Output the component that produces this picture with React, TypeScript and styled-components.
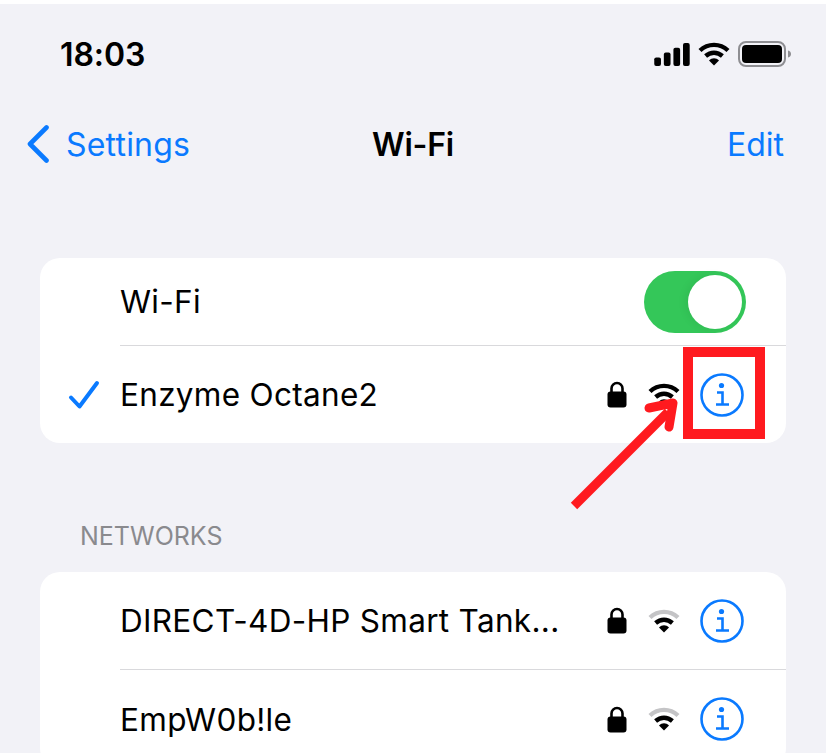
import React from "react";
import styled, { createGlobalStyle } from "styled-components";

const BLUE = "#0a7aff";

const GlobalStyle = createGlobalStyle`
  html, body {
    margin: 0;
    padding: 0;
    background: #ffffff;
    overflow: hidden;
  }
  * { box-sizing: border-box; }
`;

const Page = styled.div`
  position: relative;
  width: 826px;
  height: 749px;
  margin-top: 4px;
  background: #f2f2f7;
  overflow: hidden;
  font-family: Inter, "Liberation Sans", sans-serif;
  color: #000;
`;

const StatusBar = styled.div`
  display: flex;
  align-items: center;
  justify-content: space-between;
  height: 100px;
  padding: 0 34px 0 60px;
`;

const Time = styled.div`
  font-size: 32px;
  font-weight: 600;
  letter-spacing: -0.1px;
`;

const StatusIcons = styled.div`
  display: flex;
  align-items: center;
  gap: 8px;
`;

const NavBar = styled.div`
  display: grid;
  grid-template-columns: 1fr auto 1fr;
  align-items: center;
  height: 80px;
  padding: 0 34px;
  font-size: 32px;
`;

const BackLink = styled.div`
  display: flex;
  align-items: center;
  gap: 16px;
  margin-left: -8px;
  color: ${BLUE};
  letter-spacing: 0.2px;
`;

const NavTitle = styled.div`
  font-weight: 600;
  letter-spacing: -0.2px;
`;

const EditLink = styled.div`
  justify-self: end;
  margin-right: 8px;
  color: ${BLUE};
`;

const Card = styled.div`
  margin: 0 40px;
  background: #fff;
  border-radius: 20px;
`;

const FirstCard = styled(Card)`
  margin-top: 74px;
`;

const Row = styled.div<{ $height: number }>`
  display: flex;
  align-items: center;
  height: ${({ $height }) => $height}px;
`;

const Lead = styled.div`
  display: flex;
  align-items: center;
  justify-content: center;
  flex: none;
  width: 80px;
  padding-left: 8px;
`;

const RowBody = styled.div<{ $divider?: boolean }>`
  display: flex;
  align-items: center;
  flex: 1;
  min-width: 0;
  height: 100%;
  padding-right: 40px;
  border-bottom: ${({ $divider }) => ($divider ? "1.5px solid #d9d9dc" : "none")};
`;

const RowLabel = styled.div`
  flex: 1;
  font-size: 31.5px;
  letter-spacing: 0.3px;
  white-space: nowrap;
`;

const Toggle = styled.div`
  position: relative;
  width: 102px;
  height: 62px;
  border-radius: 31px;
  background: #34c759;
`;

const ToggleKnob = styled.div`
  position: absolute;
  top: 4px;
  right: 4px;
  width: 54px;
  height: 54px;
  border-radius: 50%;
  background: #fff;
  box-shadow: -3px 0 8px rgba(0, 0, 0, 0.06);
`;

const Accessories = styled.div`
  display: flex;
  align-items: center;
  gap: 20px;
  margin-right: 2px;
`;

const LockSlot = styled.div`
  display: flex;
  margin-right: 1px;
`;

const SectionHeader = styled.div`
  margin: 75px 0 18px 80px;
  font-size: 25px;
  line-height: 36px;
  color: #8a8a8e;
`;

const Highlight = styled.div`
  position: absolute;
  left: 683px;
  top: 343px;
  width: 82px;
  height: 92px;
  border: 10px solid #ff1a1f;
`;

const ArrowLayer = styled.svg`
  position: absolute;
  left: 0;
  top: -4px;
  pointer-events: none;
`;

const SignalIcon = () => (
  <svg width="37" height="23" viewBox="0 0 38 24">
    <rect x="1" y="15" width="7" height="9" rx="2" fill="#000" />
    <rect x="11" y="10" width="7" height="14" rx="2" fill="#000" />
    <rect x="21" y="5" width="7" height="19" rx="2" fill="#000" />
    <rect x="31" y="0" width="7" height="24" rx="2" fill="#000" />
  </svg>
);

const WifiIcon = ({ width, outer = "#000" }: { width: number; outer?: string }) => (
  <svg width={width} height={width * 0.75} viewBox="0 0 32 24">
    <path d="M2 8.5C10 1 22 1 30 8.5" fill="none" stroke={outer} strokeWidth="4.4" strokeLinecap="butt" />
    <path d="M7.6 14C12.6 9.6 19.4 9.6 24.4 14" fill="none" stroke="#000" strokeWidth="4.4" />
    <path d="M11 18.4C14 15.6 18 15.6 21 18.4L16 23.6Z" fill="#000" />
  </svg>
);

const BatteryIcon = () => (
  <svg width="54" height="26" viewBox="0 0 54 26">
    <rect x="1" y="1" width="46" height="24" rx="7" fill="none" stroke="#8e8e92" strokeWidth="2" />
    <rect x="4" y="4" width="40" height="18" rx="4" fill="#000" />
    <path d="M50 9.5C52 10 53 11.4 53 13C53 14.6 52 16 50 16.5Z" fill="#8e8e92" />
  </svg>
);

const ChevronIcon = () => (
  <svg width="24" height="38" viewBox="0 0 24 38">
    <path d="M20.5 2.5L4 19L20.5 35.5" fill="none" stroke={BLUE} strokeWidth="4.6" strokeLinecap="round" strokeLinejoin="round" />
  </svg>
);

const CheckIcon = () => (
  <svg width="32" height="30" viewBox="0 0 32 30">
    <path d="M3 17.5L11.5 26.5L29 3" fill="none" stroke={BLUE} strokeWidth="4" strokeLinecap="round" strokeLinejoin="round" />
  </svg>
);

const LockIcon = () => (
  <svg width="20" height="27" viewBox="0 0 20 27">
    <path d="M4.5 12V7a5.5 5.5 0 0 1 11 0V12" fill="none" stroke="#000" strokeWidth="2.6" transform="translate(0 0.5)" />
    <rect x="0.5" y="10.5" width="19" height="16" rx="3" fill="#000" />
  </svg>
);

const InfoIcon = () => (
  <svg width="44" height="44" viewBox="0 0 44 44">
    <circle cx="22" cy="22" r="20.5" fill="none" stroke={BLUE} strokeWidth="2.6" />
    <circle cx="21.5" cy="12.5" r="2.6" fill={BLUE} />
    <path d="M17 19.5H22.5V31.5M16 31.5H29" fill="none" stroke={BLUE} strokeWidth="2.6" />
  </svg>
);

type NetworkProps = {
  name: string;
  checked?: boolean;
  divider?: boolean;
  height: number;
  outer?: string;
};

const NetworkRow = ({ name, checked, divider, height, outer }: NetworkProps) => (
  <Row $height={height}>
    <Lead>{checked && <CheckIcon />}</Lead>
    <RowBody $divider={divider}>
      <RowLabel>{name}</RowLabel>
      <Accessories>
        <LockSlot>
          <LockIcon />
        </LockSlot>
        <WifiIcon width={32} outer={outer} />
        <InfoIcon />
      </Accessories>
    </RowBody>
  </Row>
);

export default function App() {
  return (
    <Page>
      <GlobalStyle />
      <StatusBar>
        <Time>18:03</Time>
        <StatusIcons>
          <SignalIcon />
          <WifiIcon width={32} />
          <BatteryIcon />
        </StatusIcons>
      </StatusBar>
      <NavBar>
        <BackLink>
          <ChevronIcon />
          Settings
        </BackLink>
        <NavTitle>Wi-Fi</NavTitle>
        <EditLink>Edit</EditLink>
      </NavBar>
      <FirstCard>
        <Row $height={88}>
          <Lead />
          <RowBody $divider>
            <RowLabel>Wi-Fi</RowLabel>
            <Toggle>
              <ToggleKnob />
            </Toggle>
          </RowBody>
        </Row>
        <NetworkRow name="Enzyme Octane2" height={97} checked />
      </FirstCard>
      <SectionHeader>NETWORKS</SectionHeader>
      <Card>
        <NetworkRow name="DIRECT-4D-HP Smart Tank..." height={98} divider outer="#c4c4c6" />
        <NetworkRow name="EmpW0b!le" height={98} outer="#c4c4c6" />
      </Card>
      <Highlight />
      <ArrowLayer width="826" height="753" viewBox="0 0 826 753">
        <path d="M574 506L668 412" stroke="#ff1a1f" strokeWidth="9" fill="none" />
        <path d="M649 408L673 403L669 427" stroke="#ff1a1f" strokeWidth="9" fill="none" strokeLinecap="round" strokeLinejoin="round" />
      </ArrowLayer>
    </Page>
  );
}
